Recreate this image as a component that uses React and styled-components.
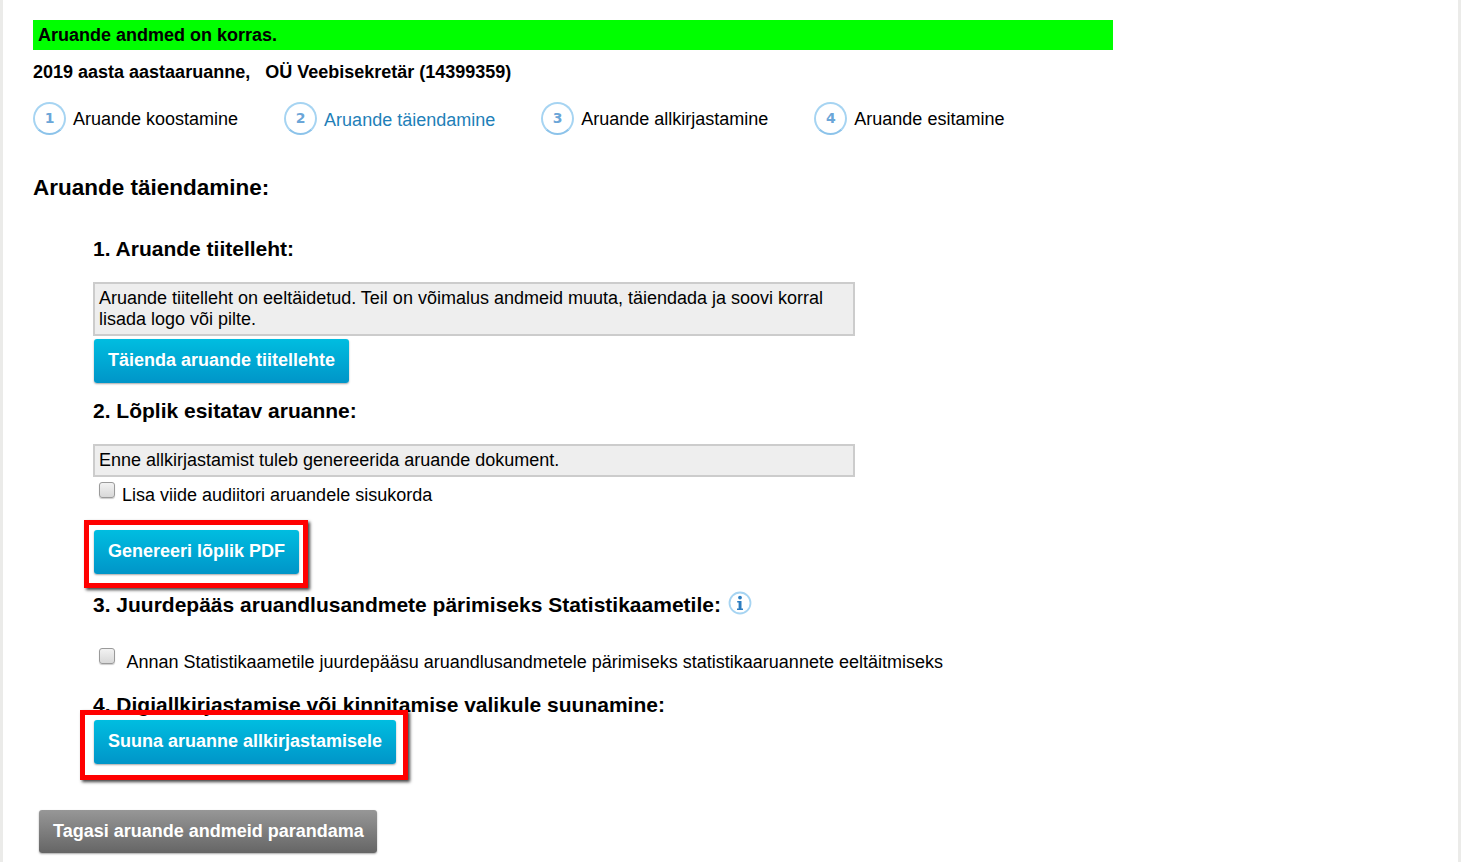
import React from 'react'
import styled, { createGlobalStyle } from 'styled-components'

const GlobalStyle = createGlobalStyle`
    html, body {
        margin: 0;
        padding: 0;
        background: #fff;
    }
    body {
        font-family: "Liberation Sans", Arial, sans-serif;
        color: #000;
        overflow: hidden;
    }
`

const steps = [
    { no: 1, text: 'Aruande koostamine', gap: 46 },
    { no: 2, text: 'Aruande täiendamine', gap: 46, active: true },
    { no: 3, text: 'Aruande allkirjastamine', gap: 46 },
    { no: 4, text: 'Aruande esitamine', gap: 0 },
]

const InfoIcon = () => (
    <svg width="24" height="24" viewBox="0 0 24 24">
        <circle cx="12" cy="12" r="10.5" fill="none" stroke="#a6d4f2" strokeWidth="1.8" />
        <circle cx="12" cy="6.6" r="1.9" fill="#2b7cc0" />
        <path d="M9.2 10h4.3v7.6h1.5v1.4H9v-1.4h1.6v-6.2H9.2z" fill="#2b7cc0" />
    </svg>
)

const App = () => {
    return (
        <Page>
            <GlobalStyle />
            <StatusBar>Aruande andmed on korras.</StatusBar>
            <ReportTitle>2019 aasta aastaaruanne,<TitleGap />OÜ Veebisekretär (14399359)</ReportTitle>
            <Steps>
                {steps.map(step => (
                    <Step key={step.no} $gap={step.gap}>
                        <StepCircle>{step.no}</StepCircle>
                        <StepLabel $active={step.active}>{step.text}</StepLabel>
                    </Step>
                ))}
            </Steps>
            <PageHeading>Aruande täiendamine:</PageHeading>
            <Section>
                <SectionHeading>1. Aruande tiitelleht:</SectionHeading>
                <InfoBox>Aruande tiitelleht on eeltäidetud. Teil on võimalus andmeid muuta, täiendada ja soovi korral lisada logo või pilte.</InfoBox>
                <BlueButton>Täienda aruande tiitellehte</BlueButton>

                <SecondHeading>2. Lõplik esitatav aruanne:</SecondHeading>
                <InfoBox>Enne allkirjastamist tuleb genereerida aruande dokument.</InfoBox>
                <CheckRow>
                    <Check />
                    <CheckLabel>Lisa viide audiitori aruandele sisukorda</CheckLabel>
                </CheckRow>
                <GenerateWrap>
                    <BlueButton>Genereeri lõplik PDF</BlueButton>
                    <RedFrame />
                </GenerateWrap>

                <AccessHeading>
                    3. Juurdepääs aruandlusandmete pärimiseks Statistikaametile:
                    <InfoLink><InfoIcon /></InfoLink>
                </AccessHeading>
                <AccessRow>
                    <Check />
                    <AccessLabel>Annan Statistikaametile juurdepääsu aruandlusandmetele pärimiseks statistikaaruannete eeltäitmiseks</AccessLabel>
                </AccessRow>

                <SignHeading>4. Digiallkirjastamise või kinnitamise valikule suunamine:</SignHeading>
                <SignWrap>
                    <BlueButton>Suuna aruanne allkirjastamisele</BlueButton>
                    <RedFrameWide />
                </SignWrap>
            </Section>
            <GreyButton>Tagasi aruande andmeid parandama</GreyButton>
        </Page>
    )
}

export default App

const Page = styled.div`
    box-sizing: border-box;
    width: 1461px;
    height: 862px;
    overflow: hidden;
    padding: 20px 0 0 30px;
    background: #fff;
    border-left: 3px solid #ebebe9;
    border-right: 3px solid #ebebe9;
`

const StatusBar = styled.div`
    width: 1080px;
    height: 30px;
    line-height: 30px;
    padding-left: 5px;
    box-sizing: border-box;
    background: #00ff00;
    font-size: 18px;
    font-weight: bold;
`

const ReportTitle = styled.div`
    margin-top: 11px;
    height: 22px;
    line-height: 22px;
    font-size: 18px;
    font-weight: bold;
`

const TitleGap = styled.span`
    display: inline-block;
    width: 15px;
`

const Steps = styled.div`
    display: flex;
    align-items: center;
    margin-top: 18px;
    height: 34px;
`

const Step = styled.div`
    display: flex;
    align-items: center;
    gap: 7px;
    margin-right: ${p => p.$gap}px;
    font-size: 18px;
`

const StepLabel = styled.span`
    padding-top: ${p => (p.$active ? 4 : 2)}px;
    color: ${p => (p.$active ? '#1f7fb8' : '#000')};
`

const StepCircle = styled.span`
    box-sizing: border-box;
    width: 33px;
    height: 33px;
    border: 2px solid #a6d4f2;
    border-bottom-color: #8cc3ea;
    border-radius: 50%;
    display: flex;
    align-items: center;
    justify-content: center;
    font-family: "DejaVu Sans", sans-serif;
    font-size: 14px;
    font-weight: bold;
    color: #6ba6d8;
`

const PageHeading = styled.h1`
    margin: 40px 0 0;
    font-size: 22.5px;
    line-height: 26px;
    font-weight: bold;
`

const Section = styled.div`
    margin-left: 60px;
`

const SectionHeading = styled.h2`
    margin: 36px 0 0;
    font-size: 21px;
    line-height: 24px;
    font-weight: bold;
`

const SecondHeading = styled(SectionHeading)`
    margin-top: 16px;
`

const AccessHeading = styled(SectionHeading)`
    margin-top: 19px;
    display: flex;
    align-items: center;
`

const SignHeading = styled(SectionHeading)`
    margin-top: 20px;
`

const InfoBox = styled.div`
    box-sizing: border-box;
    width: 762px;
    margin-top: 21px;
    padding: 4px 20px 4px 4px;
    border: 2px solid #ccc;
    background: #eee;
    font-size: 18px;
    line-height: 21px;
    & + button {
        margin-top: 3px;
    }
`

const BlueButton = styled.button`
    display: block;
    height: 44px;
    margin-left: 1px;
    padding: 0 14px 2px;
    border: none;
    border-radius: 3px;
    background: linear-gradient(to bottom, #00bde0, #0095c8);
    box-shadow: 0 1px 2px rgba(0, 0, 0, 0.35);
    color: #fff;
    font-family: inherit;
    font-size: 18px;
    font-weight: bold;
`

const CheckRow = styled.div`
    display: flex;
    align-items: flex-start;
    margin-top: 4px;
    padding-left: 6px;
    height: 28px;
`

const Check = styled.span`
    box-sizing: border-box;
    display: block;
    flex: none;
    width: 16px;
    height: 16px;
    margin-top: 1px;
    border: 1px solid #9a9a9a;
    border-radius: 3px;
    background: linear-gradient(to bottom, #f2f2f2, #d8d8d8);
    box-shadow: 0 1px 1px rgba(0, 0, 0, 0.2);
`

const CheckLabel = styled.span`
    margin-left: 7px;
    margin-top: 4px;
    font-size: 18px;
    line-height: 21px;
`

const GenerateWrap = styled.div`
    position: relative;
    margin-top: 21px;
    width: max-content;
`

const RedFrame = styled.div`
    position: absolute;
    left: -9px;
    top: -10px;
    width: 224px;
    height: 68px;
    box-sizing: border-box;
    border: 5px solid #f00;
    box-shadow: 2px 2px 3px rgba(0, 0, 0, 0.75);
`

const InfoLink = styled.span`
    display: inline-flex;
    margin-left: 7px;
    margin-top: -4px;
`

const AccessRow = styled.div`
    display: flex;
    align-items: flex-start;
    margin-top: 30px;
    padding-left: 6px;
`

const AccessLabel = styled.span`
    margin-left: 11.5px;
    margin-top: 5px;
    font-size: 18px;
    line-height: 21px;
`

const SignWrap = styled.div`
    position: relative;
    margin-top: 3px;
    width: max-content;
`

const RedFrameWide = styled(RedFrame)`
    left: -13px;
    top: -10px;
    width: 328px;
    height: 70px;
`

const GreyButton = styled(BlueButton)`
    height: 43px;
    margin: 46px 0 0 6px;
    padding: 0 13px 0 14px;
    background: linear-gradient(to bottom, #979797, #656565);
`
